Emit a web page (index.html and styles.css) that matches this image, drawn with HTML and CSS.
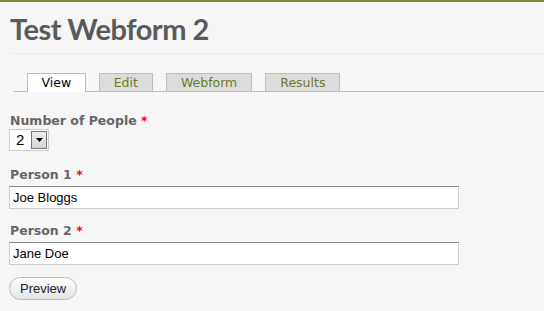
FILE: index.html
```html
<!DOCTYPE html>
<html lang="en">
<head>
    <meta charset="UTF-8">
    <title>Test Webform 2</title>
    <link rel="stylesheet" href="styles.css">
</head>
<body>
    <div class="page">
        <!-- Titre de la page -->
        <div class="title-bar">
            <h1>Test Webform 2</h1>
        </div>

        <!-- Onglets -->
        <ul class="tabs">
            <li class="tab active"><a href="#">View</a></li>
            <li class="tab"><a href="#">Edit</a></li>
            <li class="tab"><a href="#">Webform</a></li>
            <li class="tab"><a href="#">Results</a></li>
        </ul>

        <!-- Formulaire -->
        <form class="webform">
            <div class="form-item first">
                <label class="form-label">Number of People <span class="required">*</span></label>
                <span class="select-box">
                    <span class="select-value">2</span>
                    <span class="select-button">
                        <svg width="7" height="4" viewBox="0 0 7 4"><polygon points="0,0 7,0 3.5,4" fill="#000"/></svg>
                    </span>
                </span>
            </div>
            <div class="form-item">
                <label class="form-label" for="person1">Person 1 <span class="required">*</span></label>
                <input class="form-text" type="text" id="person1" value="Joe Bloggs">
            </div>
            <div class="form-item last">
                <label class="form-label" for="person2">Person 2 <span class="required">*</span></label>
                <input class="form-text" type="text" id="person2" value="Jane Doe">
            </div>
            <button class="form-submit" type="button">Preview</button>
        </form>
    </div>
</body>
</html>
```

FILE: styles.css
```css
body {
    margin: 0;
    padding: 0;
    background-color: #f6f6f6;
    font-family: "DejaVu Sans", Verdana, sans-serif;
}

.page {
    border-top: 2px solid #7d8a2e;
}

/* Titre */
.title-bar {
    margin-left: 10px;
    height: 51px;
    border-bottom: 1px solid #ececec;
}

.title-bar h1 {
    margin: 0;
    padding-top: 9px;
    font-family: Lato, sans-serif;
    font-weight: bold;
    font-size: 29px;
    line-height: 36px;
    letter-spacing: -0.5px;
    color: #5a5a5a;
}

/* Onglets */
.tabs {
    display: flex;
    gap: 13px;
    list-style: none;
    margin: 19px 0 0 14px;
    padding: 0 0 0 13px;
    border-bottom: 1px solid #bbb;
    height: 18px;
}

.tab a {
    display: block;
    height: 17px;
    padding: 0 14px;
    border: 1px solid #bbb;
    border-bottom: none;
    background-color: #dcdcdc;
    color: #6b7a23;
    font-size: 12.5px;
    line-height: 18px;
    text-decoration: none;
}

.tab.active a {
    background-color: #fff;
    color: #000;
    height: 18px;
    padding: 0 13.5px;
}

/* Formulaire */
.webform {
    padding: 21px 0 0 9px;
}

.form-item {
    margin-bottom: 14px;
}

.form-item.first {
    margin-bottom: 16px;
}

.form-item.last {
    margin-bottom: 12px;
}

.form-label {
    display: block;
    font-weight: bold;
    font-size: 12.5px;
    line-height: 16px;
    color: #666;
    margin-left: 1px;
}

.required {
    color: #f00;
}

.select-box {
    display: inline-flex;
    width: 40px;
    height: 22px;
    box-sizing: border-box;
    border: 1px solid #ccc;
    background-color: #fff;
    font-family: "Liberation Sans", Arial, sans-serif;
    font-size: 15px;
}

.select-value {
    flex: 1;
    padding-left: 6px;
    line-height: 20px;
}

.select-button {
    display: flex;
    align-items: center;
    justify-content: center;
    width: 16px;
    margin: 1px 1px 1px 0;
    box-sizing: border-box;
    border: 1px solid #777;
    background: linear-gradient(#ececec, #d4d4d4);
}

.form-text {
    display: block;
    width: 450px;
    height: 23px;
    box-sizing: border-box;
    margin: 3px 0 0 0;
    padding: 0 3px;
    border: 1px solid #ccc;
    border-top-color: #888;
    background-color: #fff;
    font-family: "Liberation Sans", Arial, sans-serif;
    font-size: 13px;
    color: #000;
}

.form-submit {
    display: block;
    height: 23px;
    padding: 0 10px;
    border: 1px solid #bbb;
    border-radius: 12px;
    background: linear-gradient(#fff, #e3e3e3);
    font-family: "Liberation Sans", Arial, sans-serif;
    font-size: 13px;
    color: #222;
}
```
